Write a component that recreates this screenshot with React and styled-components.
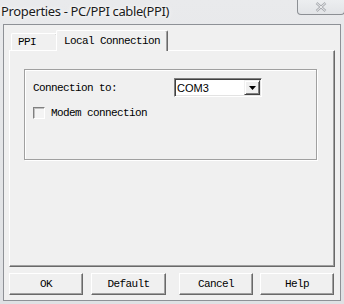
import styled, { createGlobalStyle } from "styled-components";

const GlobalStyle = createGlobalStyle`
  html, body {
    margin: 0;
    padding: 0;
    background: #e6e7e9;
  }
`;

const Window = styled.div`
  width: 344px;
  height: 304px;
  display: flex;
  flex-direction: column;
  background: linear-gradient(180deg, #e9eaec 0%, #dfe1e4 100%);
  box-sizing: border-box;
  overflow: hidden;
`;

const TitleBar = styled.div`
  height: 23px;
  display: flex;
  align-items: flex-start;
  justify-content: space-between;
  flex-shrink: 0;
`;

const Title = styled.div`
  font-family: "Noto Sans", "Open Sans", sans-serif;
  font-size: 13px;
  color: #1b1b1b;
  padding: 2px 0 0 1px;
  letter-spacing: -0.35px;
  text-shadow: 0 0 6px #fff, 0 0 3px #fff;
`;

const CloseButton = styled.div`
  width: 48px;
  height: 15px;
  margin-right: -1px;
  border: 1px solid #8c8f94;
  border-top: none;
  border-radius: 0 0 4px 4px;
  background: linear-gradient(180deg, #eceef0 0%, #e2e4e7 100%);
  display: flex;
  align-items: center;
  justify-content: center;
  box-sizing: border-box;
`;

const Client = styled.div`
  flex: 1;
  margin: 1px 3px 3px 3px;
  border: 1px solid #8e9196;
  background: #f0f0f0;
  display: flex;
  flex-direction: column;
  padding: 5px;
  font-family: "Liberation Mono", monospace;
  font-size: 11px;
  letter-spacing: -0.6px;
  color: #000;
`;

const TabStrip = styled.div`
  display: flex;
  align-items: flex-end;
  height: 20px;
  padding-left: 2px;
  position: relative;
  z-index: 1;
`;

const Tab = styled.div`
  height: ${(p) => (p.$active ? 21 : 17)}px;
  padding: 0 ${(p) => (p.$active ? 7 : 6)}px;
  margin-left: ${(p) => (p.$active ? -2 : 0)}px;
  margin-bottom: ${(p) => (p.$active ? -1 : 0)}px;
  box-sizing: border-box;
  width: ${(p) => p.$w}px;
  background: #f0f0f0;
  border-top: 1px solid #fff;
  border-left: 1px solid #fff;
  border-right: 1px solid #696969;
  box-shadow: inset -1px 0 0 #a0a0a0;
  border-radius: 2px 2px 0 0;
  display: flex;
  align-items: ${(p) => (p.$active ? "flex-start" : "center")};
  padding-top: ${(p) => (p.$active ? 4 : 0)}px;
  white-space: nowrap;
`;

const Panel = styled.div`
  height: 217px;
  box-sizing: border-box;
  border-top: 1px solid #fff;
  border-left: 1px solid #fff;
  border-right: 1px solid #696969;
  border-bottom: 1px solid #696969;
  box-shadow: inset -1px -1px 0 #a0a0a0;
  padding: 18px 0 0 14px;
`;

const GroupBox = styled.div`
  width: 293px;
  height: 91px;
  box-sizing: border-box;
  border: 1px solid #a0a0a0;
  box-shadow: 1px 1px 0 #fff, inset 1px 1px 0 #fff;
  padding: 8px 0 0 8px;
  display: flex;
  flex-direction: column;
  gap: 10px;
`;

const Row = styled.div`
  display: flex;
  align-items: center;
  height: 19px;
`;

const Label = styled.span`
  width: 141px;
  white-space: nowrap;
`;

const Combo = styled.div`
  width: 88px;
  height: 19px;
  box-sizing: border-box;
  border-top: 1px solid #808080;
  border-left: 1px solid #808080;
  border-right: 1px solid #fff;
  border-bottom: 1px solid #fff;
  box-shadow: inset 1px 1px 0 #404040, inset -1px -1px 0 #e3e3e3;
  background: #fff;
  display: flex;
  align-items: center;
  padding: 0 1px 0 2px;
`;

const ComboText = styled.span`
  flex: 1;
  font-family: "Liberation Sans Narrow", "Liberation Sans", sans-serif;
  font-size: 11px;
  letter-spacing: 0;
`;

const DropButton = styled.div`
  width: 16px;
  height: 15px;
  box-sizing: border-box;
  background: #f0f0f0;
  border-top: 1px solid #f0f0f0;
  border-left: 1px solid #f0f0f0;
  border-right: 1px solid #404040;
  border-bottom: 1px solid #404040;
  box-shadow: inset 1px 1px 0 #fff, inset -1px -1px 0 #808080;
  display: flex;
  align-items: center;
  justify-content: center;
`;

const CheckRow = styled.label`
  display: flex;
  align-items: center;
  gap: 6px;
  height: 12px;
`;

const CheckBox = styled.span`
  width: 12px;
  height: 12px;
  box-sizing: border-box;
  border-top: 1px solid #808080;
  border-left: 1px solid #808080;
  border-right: 1px solid #fff;
  border-bottom: 1px solid #fff;
  box-shadow: inset 1px 1px 0 #c0c0c0;
  background: #f4f4f4;
`;

const ButtonRow = styled.div`
  display: flex;
  margin-top: 6px;
`;

const Button = styled.div`
  width: ${(p) => p.$w}px;
  height: 22px;
  margin-left: ${(p) => p.$ml || 0}px;
  box-sizing: border-box;
  background: #f0f0f0;
  border-top: 1px solid #fff;
  border-left: 1px solid #fff;
  border-right: 1px solid #696969;
  border-bottom: 1px solid #696969;
  box-shadow: inset -1px -1px 0 #a0a0a0;
  display: flex;
  align-items: center;
  justify-content: center;
`;

const CloseIcon = () => (
  <svg width="12" height="10" viewBox="0 0 12 10">
    <path
      d="M1.5 1 L10.5 9 M10.5 1 L1.5 9"
      stroke="#a9acb1"
      strokeWidth="2.4"
      fill="none"
    />
    <path
      d="M1.5 1 L10.5 9 M10.5 1 L1.5 9"
      stroke="#f4f5f6"
      strokeWidth="0.9"
      fill="none"
    />
  </svg>
);

const Arrow = () => (
  <svg width="7" height="4" viewBox="0 0 7 4">
    <path d="M0 0 H7 L3.5 4 Z" fill="#000" />
  </svg>
);

export default function App() {
  return (
    <>
      <GlobalStyle />
      <Window>
        <TitleBar>
          <Title>Properties - PC/PPI cable(PPI)</Title>
          <CloseButton>
            <CloseIcon />
          </CloseButton>
        </TitleBar>
        <Client>
          <TabStrip>
            <Tab $w={47}>PPI</Tab>
            <Tab $active $w={112}>
              Local Connection
            </Tab>
          </TabStrip>
          <Panel>
            <GroupBox>
              <Row>
                <Label>Connection to:</Label>
                <Combo>
                  <ComboText>COM3</ComboText>
                  <DropButton>
                    <Arrow />
                  </DropButton>
                </Combo>
              </Row>
              <CheckRow>
                <CheckBox />
                <span>Modem connection</span>
              </CheckRow>
            </GroupBox>
          </Panel>
          <ButtonRow>
            <Button $w={74}>OK</Button>
            <Button $w={75} $ml={8}>
              Default
            </Button>
            <Button $w={74} $ml={13}>
              Cancel
            </Button>
            <Button $w={74} $ml={7}>
              Help
            </Button>
          </ButtonRow>
        </Client>
      </Window>
    </>
  );
}
